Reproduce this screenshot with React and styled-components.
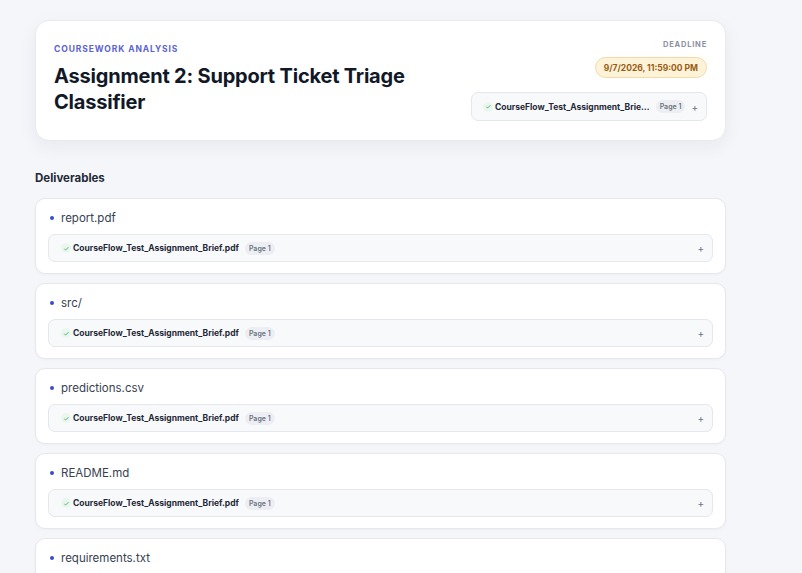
import styled, { createGlobalStyle } from "styled-components";

const GlobalStyle = createGlobalStyle`
  body {
    margin: 0;
    background: #f5f6fa;
    font-family: Inter, "Liberation Sans", sans-serif;
    color: #1f2937;
  }
`;

const Page = styled.div`
  padding: 20px 35px;
  width: 691px;
`;

const HeaderCard = styled.section`
  background: #ffffff;
  border: 1px solid #e8eaf0;
  border-radius: 14px;
  box-shadow: 0 6px 18px rgba(30, 41, 59, 0.06);
  padding: 19px 18px;
  display: flex;
  align-items: center;
  justify-content: space-between;
  gap: 24px;
`;

const TitleBlock = styled.div`
  flex: 1;
  min-width: 0;
  max-width: 380px;
  margin-bottom: 4px;
`;

const Eyebrow = styled.div`
  font-size: 8.5px;
  line-height: 12px;
  font-weight: 700;
  letter-spacing: 0.9px;
  color: #5b63d3;
  text-transform: uppercase;
`;

const Title = styled.h1`
  margin: 8px 0 0;
  font-size: 20px;
  line-height: 26px;
  font-weight: 700;
  letter-spacing: -0.2px;
  color: #111827;
`;

const Meta = styled.div`
  display: flex;
  flex-direction: column;
  align-items: flex-end;
  width: 236px;
  flex-shrink: 0;
`;

const MetaLabel = styled.div`
  font-size: 7.5px;
  line-height: 10px;
  font-weight: 700;
  letter-spacing: 0.8px;
  color: #8b93a3;
`;

const DatePill = styled.div`
  margin-top: 7px;
  height: 21px;
  box-sizing: border-box;
  padding: 0 8px;
  display: flex;
  align-items: center;
  border-radius: 999px;
  background: #fdf3d8;
  border: 1px solid #f6d9a4;
  color: #9a5b12;
  font-size: 8.5px;
  font-weight: 700;
`;

const SourceChip = styled.div`
  margin-top: ${(p) => (p.$top ? "14px" : "0")};
  width: 100%;
  height: ${(p) => (p.$full ? "28px" : "29px")};
  box-sizing: border-box;
  display: flex;
  align-items: center;
  padding: ${(p) => (p.$full ? "0 8px 0 12px" : "0 8px 0 11px")};
  background: #f8f9fb;
  border: 1px solid #e4e7ec;
  border-radius: 7px;
`;

const Check = styled.span`
  display: inline-flex;
  align-items: center;
  justify-content: center;
  width: 10px;
  height: 10px;
  margin-right: 2px;
  border-radius: 50%;
  background: #eaf7ef;
  color: #3fae62;
  font-size: 7px;
  flex-shrink: 0;
`;

const FileName = styled.span`
  font-size: 8.5px;
  font-weight: 700;
  color: #1f2937;
  white-space: nowrap;
  overflow: hidden;
  text-overflow: ellipsis;
  min-width: 0;
`;

const PageTag = styled.span`
  flex-shrink: 0;
  margin-left: 6px;
  padding: 2px 4px;
  border-radius: 8px;
  background: #eceef3;
  color: #6b7280;
  font-size: 7px;
  font-weight: 600;
`;

const Plus = styled.span`
  margin-left: auto;
  padding-left: 6px;
  flex-shrink: 0;
  color: #6b7280;
  font-size: 10px;
  line-height: 1;
`;

const SectionTitle = styled.h2`
  margin: 30px 0 12px;
  font-size: 11.5px;
  line-height: 15px;
  font-weight: 700;
  color: #1f2937;
`;

const List = styled.div`
  display: flex;
  flex-direction: column;
  gap: 9px;
`;

const ItemCard = styled.div`
  background: #ffffff;
  border: 1px solid #e6e8ee;
  border-radius: 10px;
  padding: 12px 12px 11px;
  box-shadow: 0 1px 3px rgba(30, 41, 59, 0.03);
`;

const ItemName = styled.div`
  display: flex;
  align-items: center;
  gap: 7px;
  margin: 0 0 9px 2px;
  font-size: 11.5px;
  line-height: 14px;
  color: #374151;
`;

const Dot = styled.span`
  width: 4px;
  height: 4px;
  border-radius: 50%;
  background: #3b4cca;
`;

const SOURCE = "CourseFlow_Test_Assignment_Brief.pdf";

const deliverables = [
  "report.pdf",
  "src/",
  "predictions.csv",
  "README.md",
  "requirements.txt",
];

function Source({ top, full }) {
  return (
    <SourceChip $top={top} $full={full}>
      <Check>✓</Check>
      <FileName>{SOURCE}</FileName>
      <PageTag>Page 1</PageTag>
      <Plus>+</Plus>
    </SourceChip>
  );
}

export default function App() {
  return (
    <>
      <GlobalStyle />
      <Page>
        <HeaderCard>
          <TitleBlock>
            <Eyebrow>Coursework Analysis</Eyebrow>
            <Title>Assignment 2: Support Ticket Triage Classifier</Title>
          </TitleBlock>
          <Meta>
            <MetaLabel>DEADLINE</MetaLabel>
            <DatePill>9/7/2026, 11:59:00 PM</DatePill>
            <Source top />
          </Meta>
        </HeaderCard>

        <SectionTitle>Deliverables</SectionTitle>
        <List>
          {deliverables.map((name) => (
            <ItemCard key={name}>
              <ItemName>
                <Dot />
                {name}
              </ItemName>
              <Source full />
            </ItemCard>
          ))}
        </List>
      </Page>
    </>
  );
}
